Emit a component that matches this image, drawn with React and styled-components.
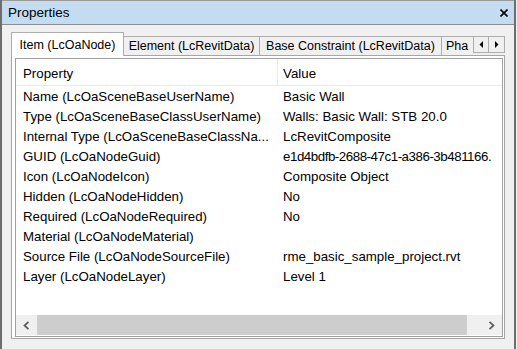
import React from "react";
import styled, { createGlobalStyle } from "styled-components";

const GlobalStyle = createGlobalStyle`
  html, body { margin: 0; padding: 0; background: #f0f0f0; }
  body { font-family: "Liberation Sans", Arial, sans-serif; color: #000; }
`;

const Window = styled.div`
  box-sizing: border-box;
  width: 516px;
  height: 349px;
  display: flex;
  flex-direction: column;
  border-left: 2px solid #6e6e6e;
  border-right: 2px solid #6e6e6e;
  background: #f0f0f0;
`;

const TitleBar = styled.div`
  box-sizing: border-box;
  height: 25px;
  display: flex;
  align-items: center;
  justify-content: space-between;
  padding: 0 6px 0 6px;
  background: #c4dcf2;
  border-top: 1px solid #9a9a9a;
  border-bottom: 1px solid #8e8e8e;
  font-size: 13.5px;
`;

const CloseIcon = styled.svg`
  width: 8px;
  height: 8px;
`;

const Content = styled.div`
  flex: 1;
  min-height: 0;
  display: flex;
  flex-direction: column;
  padding: 7px 9px 10px 9px;
`;

const TabStrip = styled.div`
  height: 24px;
  margin-bottom: -1px;
  display: flex;
  position: relative;
  z-index: 1;
`;

const TabList = styled.div`
  flex: 1;
  min-width: 0;
  overflow: hidden;
  display: flex;
  align-items: flex-end;
`;

const Tab = styled.div`
  box-sizing: border-box;
  flex: 0 0 ${(p) => p.$w}px;
  height: ${(p) => (p.$active ? 24 : 19)}px;
  margin-bottom: ${(p) => (p.$active ? 0 : 1)}px;
  display: flex;
  align-items: center;
  justify-content: ${(p) => (p.$left ? "flex-start" : "center")};
  padding-left: ${(p) => (p.$left ? 4 : 0)}px;
  background: ${(p) => (p.$active ? "#ffffff" : "#f0f0f0")};
  border: 1px solid #adadad;
  border-bottom: none;
  border-left: ${(p) => (p.$first ? "1px solid #adadad" : "none")};
  font-size: 12.5px;
  white-space: nowrap;
`;

const ArrowGroup = styled.div`
  display: flex;
  margin-top: 4px;
  height: 17px;
`;

const ArrowButton = styled.div`
  box-sizing: border-box;
  width: 16px;
  height: 17px;
  display: flex;
  align-items: center;
  justify-content: center;
  background: #f0f0f0;
  border: 1px solid #adadad;
  & + & { border-left: none; }
`;

const Panel = styled.div`
  flex: 1;
  min-height: 0;
  display: flex;
  background: #ffffff;
  border: 1px solid #a6a6a6;
  padding: 2px 1px 1px 3px;
`;

const ListView = styled.div`
  flex: 1;
  min-width: 0;
  display: flex;
  flex-direction: column;
  background: #ffffff;
  border: 1px solid #a0a0a0;
  font-size: 13.3px;
  overflow: hidden;
`;

const HeaderRow = styled.div`
  box-sizing: border-box;
  height: 27px;
  display: grid;
  grid-template-columns: 261px 1fr;
  border-bottom: 1px solid #e6e9ee;
`;

const HeaderCell = styled.div`
  display: flex;
  align-items: center;
  padding-left: ${(p) => p.$pad}px;
  padding-top: 3px;
  border-left: ${(p) => (p.$divider ? "1px solid #e6e9ee" : "none")};
`;

const Rows = styled.div`
  flex: 1;
  min-height: 0;
  padding-top: 1px;
`;

const Row = styled.div`
  height: 20px;
  display: grid;
  grid-template-columns: 261px 1fr;
  line-height: 20px;
`;

const Cell = styled.div`
  padding-left: ${(p) => p.$pad}px;
  white-space: nowrap;
  overflow: hidden;
  letter-spacing: ${(p) => (p.$tight ? "-0.45px" : "normal")};
`;

const ScrollBar = styled.div`
  height: 20px;
  margin-bottom: 1px;
  display: flex;
  background: #f0f0f0;
`;

const ScrollButton = styled.div`
  width: 21px;
  display: flex;
  align-items: center;
  justify-content: center;
`;

const Track = styled.div`
  flex: 1;
  display: flex;
`;

const Thumb = styled.div`
  width: ${(p) => p.$w}px;
  background: #cdcdcd;
`;

const rows = [
  ["Name (LcOaSceneBaseUserName)", "Basic Wall"],
  ["Type (LcOaSceneBaseClassUserName)", "Walls: Basic Wall: STB 20.0"],
  ["Internal Type (LcOaSceneBaseClassNa...", "LcRevitComposite"],
  ["GUID (LcOaNodeGuid)", "e1d4bdfb-2688-47c1-a386-3b481166.", true],
  ["Icon (LcOaNodeIcon)", "Composite Object"],
  ["Hidden (LcOaNodeHidden)", "No"],
  ["Required (LcOaNodeRequired)", "No"],
  ["Material (LcOaNodeMaterial)", ""],
  ["Source File (LcOaNodeSourceFile)", "rme_basic_sample_project.rvt"],
  ["Layer (LcOaNodeLayer)", "Level 1"],
];

export default function App() {
  return (
    <>
      <GlobalStyle />
      <Window>
        <TitleBar>
          <span>Properties</span>
          <CloseIcon viewBox="0 0 8 8">
            <path d="M0.5 0.5 L7.5 7.5 M7.5 0.5 L0.5 7.5" stroke="#000" strokeWidth="1.6" fill="none" />
          </CloseIcon>
        </TitleBar>
        <Content>
          <TabStrip>
            <TabList>
              <Tab $active $first $w={113}>Item (LcOaNode)</Tab>
              <Tab $w={136}>Element (LcRevitData)</Tab>
              <Tab $w={182}>Base Constraint (LcRevitData)</Tab>
              <Tab $w={90} $left>Pha</Tab>
            </TabList>
            <ArrowGroup>
              <ArrowButton>
                <svg width="4" height="7" viewBox="0 0 4 7">
                  <path d="M4 0 L0.5 3.5 L4 7 Z" fill="#000" />
                </svg>
              </ArrowButton>
              <ArrowButton>
                <svg width="4" height="7" viewBox="0 0 4 7">
                  <path d="M0 0 L3.5 3.5 L0 7 Z" fill="#000" />
                </svg>
              </ArrowButton>
            </ArrowGroup>
          </TabStrip>
          <Panel>
            <ListView>
              <HeaderRow>
                <HeaderCell $pad={7}>Property</HeaderCell>
                <HeaderCell $pad={5} $divider>Value</HeaderCell>
              </HeaderRow>
              <Rows>
                {rows.map(([k, v, tight]) => (
                  <Row key={k}>
                    <Cell $pad={7}>{k}</Cell>
                    <Cell $pad={6} $tight={tight}>{v}</Cell>
                  </Row>
                ))}
              </Rows>
              <ScrollBar>
                <ScrollButton>
                  <svg width="7" height="9" viewBox="0 0 7 9">
                    <path d="M5.5 0.8 L1.5 4.5 L5.5 8.2" stroke="#606060" strokeWidth="1.8" fill="none" />
                  </svg>
                </ScrollButton>
                <Track>
                  <Thumb $w={430} />
                </Track>
                <ScrollButton>
                  <svg width="7" height="9" viewBox="0 0 7 9">
                    <path d="M1.5 0.8 L5.5 4.5 L1.5 8.2" stroke="#606060" strokeWidth="1.8" fill="none" />
                  </svg>
                </ScrollButton>
              </ScrollBar>
            </ListView>
          </Panel>
        </Content>
      </Window>
    </>
  );
}
